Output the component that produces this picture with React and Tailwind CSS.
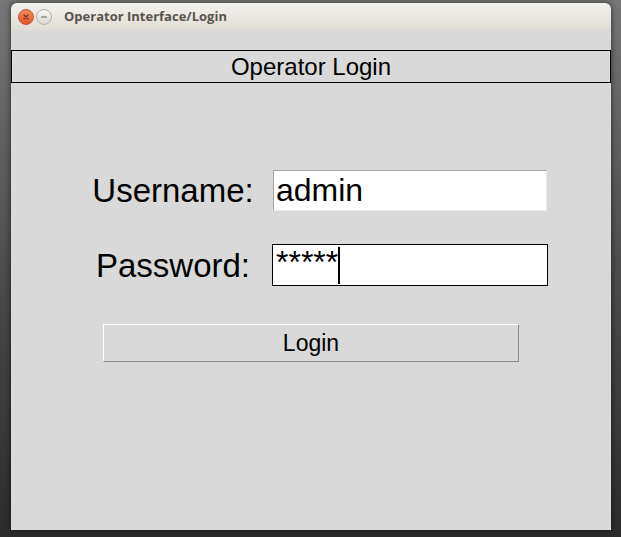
export default function App() {
  const sans = { fontFamily: '"Liberation Sans", Arial, sans-serif' }

  return (
    <div className="w-[621px] h-[537px] overflow-hidden bg-gradient-to-b from-[#777777] via-[#4d4d4d] to-[#2c2c2c] pt-[3px] pl-[11px]">
      <div className="w-[600px] h-[527px] flex flex-col rounded-t-[6px] overflow-hidden shadow-[0_0_6px_rgba(0,0,0,0.6)]">
        {/* Title bar */}
        <div className="h-[27px] shrink-0 flex items-center bg-gradient-to-b from-[#f4f2ef] to-[#e1dcd4] pl-[7px]">
          <div className="w-[16px] h-[16px] rounded-full bg-gradient-to-b from-[#f58a5f] to-[#e0552b] border border-[#c9532f] flex items-center justify-center">
            <svg width="8" height="8" viewBox="0 0 8 8">
              <path d="M2 2 L6 6 M6 2 L2 6" stroke="#7a2a12" strokeWidth="1.1" strokeLinecap="round" />
            </svg>
          </div>
          <div className="ml-[2px] w-[16px] h-[16px] rounded-full bg-gradient-to-b from-[#f7f6f4] to-[#dcd8d2] border border-[#b3aea6] flex items-center justify-center">
            <svg width="8" height="8" viewBox="0 0 8 8">
              <path d="M1.5 4 L6.5 4" stroke="#6b6762" strokeWidth="1.2" strokeLinecap="round" />
            </svg>
          </div>
          <span
            className="ml-[12px] text-[13px] font-bold text-[#57534e] leading-none"
            style={{ fontFamily: '"Open Sans", "DejaVu Sans", sans-serif' }}
          >
            Operator Interface/Login
          </span>
        </div>

        {/* Body */}
        <div className="flex-1 bg-[#d9d9d9] flex flex-col text-black" style={sans}>
          <div className="mt-[20px] h-[33px] border border-black flex items-center justify-center text-[24px] leading-none">
            Operator Login
          </div>

          <div className="mt-[87px] flex h-[41px]">
            <div className="ml-[72px] w-[180px] text-center text-[33px] leading-[41px]">Username:</div>
            <div className="ml-[10px] w-[274px] h-[41px] bg-white border-t border-l border-t-[#a3a3a3] border-l-[#a3a3a3] border-b border-r border-b-[#ececec] border-r-[#ececec] text-[32px] leading-[39px] pl-[2px]">
              admin
            </div>
          </div>

          <div className="mt-[33px] flex h-[42px]">
            <div className="ml-[72px] w-[180px] text-center text-[33px] leading-[44px]">Password:</div>
            <div className="ml-[9px] w-[276px] h-[42px] bg-white border border-black flex items-start pl-[3px]">
              <span className="text-[32px] leading-[34px]">*****</span>
              <span className="mt-[2px] w-[2px] h-[37px] bg-black" />
            </div>
          </div>

          <div className="mt-[38px] ml-[92px] w-[416px] h-[38px] border-t border-l border-t-white border-l-white border-b border-r border-b-[#8a8a8a] border-r-[#8a8a8a] flex items-center justify-center text-[23px] leading-none">
            Login
          </div>
        </div>
      </div>
    </div>
  )
}
